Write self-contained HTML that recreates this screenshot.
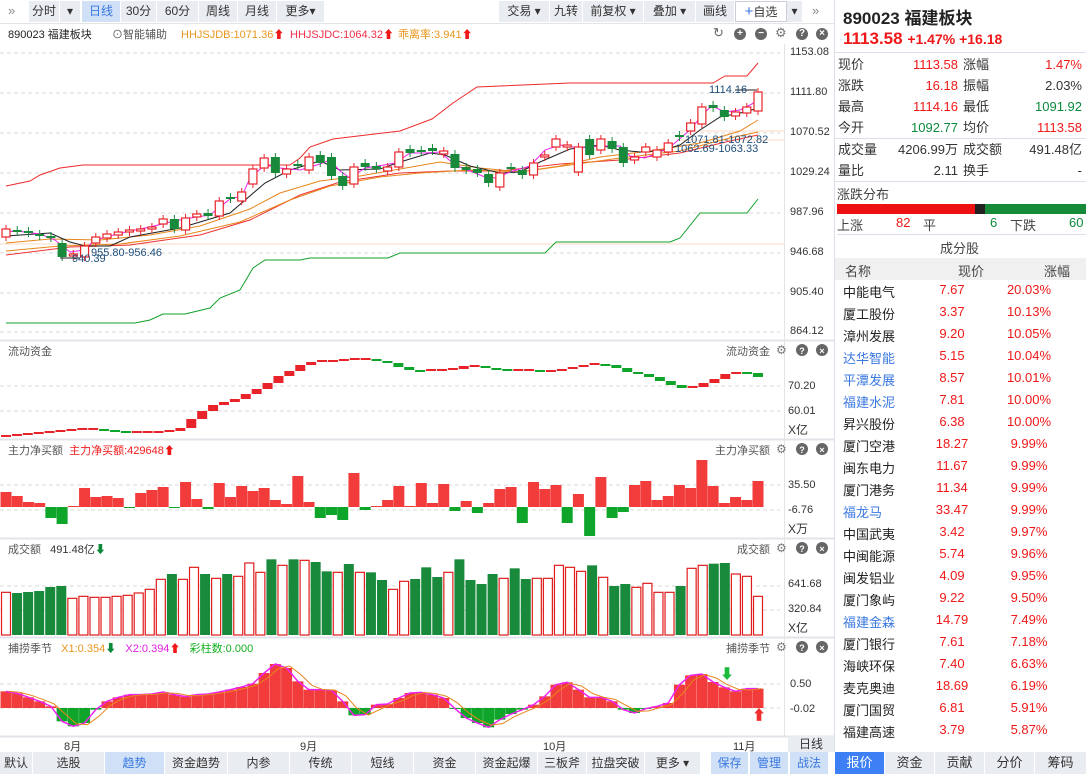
<!DOCTYPE html>
<html><head><meta charset="utf-8">
<style>
*{margin:0;padding:0;box-sizing:border-box}
body{width:1086px;height:774px;overflow:hidden;background:#fff;font-family:"Liberation Sans","Noto Sans CJK SC",sans-serif;font-size:12px;color:#333;position:relative}
.a{position:absolute;white-space:nowrap}
.btn{position:absolute;top:1px;height:21px;background:#e9ecf1;line-height:21px;text-align:center;font-size:12px;color:#333}
.bb{position:absolute;top:752px;height:22px;background:#e9ecf1;line-height:22px;text-align:center;font-size:12px;color:#333}
.r{color:#f01818}.g{color:#0b8a3c}
.rp{position:absolute;left:834px;width:252px}
.row{position:absolute;left:0;width:252px;height:21px;font-size:13px;line-height:21px}
.tab{position:absolute;top:752px;height:22px;width:50px;background:#e9ecf1;line-height:22px;text-align:center;font-size:13px;border-left:1px solid #fff}
.ic{position:absolute;width:12px;height:12px;border-radius:6px;background:#666;color:#fff;font-size:10px;line-height:12px;text-align:center;font-weight:bold}
</style></head><body>
<svg id="sv" width="834" height="774" style="position:absolute;left:0;top:0"></svg>

<div class="a" style="left:8px;top:3px;color:#888;font-size:13px">»</div>
<div class="btn" style="left:29px;width:30px">分时</div>
<div class="btn" style="left:60px;width:20px">▾</div>
<div class="btn" style="left:82px;width:38px;background:#cfe0f7;color:#3a78e0">日线</div>
<div class="btn" style="left:121px;width:35px">30分</div>
<div class="btn" style="left:157px;width:41px">60分</div>
<div class="btn" style="left:199px;width:38px">周线</div>
<div class="btn" style="left:238px;width:38px">月线</div>
<div class="btn" style="left:277px;width:47px">更多▾</div>
<div class="btn" style="left:499px;width:50px">交易 ▾</div>
<div class="btn" style="left:550px;width:32px">九转</div>
<div class="btn" style="left:583px;width:60px">前复权 ▾</div>
<div class="btn" style="left:644px;width:51px">叠加 ▾</div>
<div class="btn" style="left:696px;width:38px">画线</div>
<div class="btn" style="left:735px;width:52px;background:#fff;border:1px solid #ccd;line-height:19px"><span style="color:#3a78e0;font-size:15px">+</span>自选</div>
<div class="btn" style="left:787px;width:15px">▾</div>
<div class="a" style="left:812px;top:3px;color:#888;font-size:13px">»</div>
<div class="a" style="left:0;top:23px;width:834px;border-top:1px solid #e4e4e4"></div>

<div class="a" style="left:8px;top:26px;font-size:11px;color:#222">890023 福建板块</div>
<div class="a" style="left:112px;top:26px;font-size:11px;color:#555">⊙智能辅助</div>
<div class="a" style="left:181px;top:26px;font-size:11px;color:#e8961c">HHJSJDB:1071.36<span class="r">⬆</span></div>
<div class="a" style="left:290px;top:26px;font-size:11px;color:#f0304a">HHJSJDC:1064.32<span class="r">⬆</span></div>
<div class="a" style="left:398px;top:26px;font-size:11px;color:#e8961c">乖离率:3.941<span class="r">⬆</span></div>
<div class="a" style="left:713px;top:25px;font-size:13px;color:#666">↻</div>
<div class="ic" style="left:734px;top:28px">+</div>
<div class="ic" style="left:755px;top:28px">−</div>
<div class="a" style="left:775px;top:25px;font-size:13px;color:#777">⚙</div>
<div class="ic" style="left:796px;top:28px">?</div>
<div class="ic" style="left:816px;top:28px">×</div>

<div class="a" style="left:790px;top:46px;font-size:11px">1153.08</div>
<div class="a" style="left:790px;top:86px;font-size:11px">1111.80</div>
<div class="a" style="left:790px;top:126px;font-size:11px">1070.52</div>
<div class="a" style="left:790px;top:166px;font-size:11px">1029.24</div>
<div class="a" style="left:790px;top:206px;font-size:11px">987.96</div>
<div class="a" style="left:790px;top:246px;font-size:11px">946.68</div>
<div class="a" style="left:790px;top:286px;font-size:11px">905.40</div>
<div class="a" style="left:790px;top:325px;font-size:11px">864.12</div>
<div class="a" style="left:91px;top:247px;font-size:11px;color:#1f4e7a">955.80-956.46</div>
<div class="a" style="left:72px;top:253px;font-size:11px;color:#1f4e7a">940.39</div>
<div class="a" style="left:685px;top:134px;font-size:11px;color:#1f4e7a">1071.81-1072.82</div>
<div class="a" style="left:675px;top:143px;font-size:11px;color:#1f4e7a">1062.69-1063.33</div>
<div class="a" style="left:709px;top:84px;font-size:11px;color:#1f4e7a">1114.16</div>

<div class="a" style="left:8px;top:343px;font-size:11px;color:#555">流动资金</div>
<div class="a" style="left:726px;top:343px;font-size:11px;color:#555">流动资金</div>
<div class="a" style="left:788px;top:380px;font-size:11px">70.20</div>
<div class="a" style="left:788px;top:405px;font-size:11px">60.01</div>
<div class="a" style="left:788px;top:421px;font-size:12px">X亿</div>

<div class="a" style="left:8px;top:442px;font-size:11px;color:#555">主力净买额 <span class="r">&nbsp;主力净买额:429648⬆</span></div>
<div class="a" style="left:715px;top:442px;font-size:11px;color:#555">主力净买额</div>
<div class="a" style="left:788px;top:479px;font-size:11px">35.50</div>
<div class="a" style="left:788px;top:504px;font-size:11px">-6.76</div>
<div class="a" style="left:788px;top:520px;font-size:12px">X万</div>

<div class="a" style="left:8px;top:541px;font-size:11px;color:#555">成交额 &nbsp; <span style="color:#333">491.48亿</span><span class="g">⬇</span></div>
<div class="a" style="left:737px;top:541px;font-size:11px;color:#555">成交额</div>
<div class="a" style="left:788px;top:578px;font-size:11px">641.68</div>
<div class="a" style="left:788px;top:603px;font-size:11px">320.84</div>
<div class="a" style="left:788px;top:619px;font-size:12px">X亿</div>

<div class="a" style="left:8px;top:640px;font-size:11px;color:#555">捕捞季节 &nbsp; <span style="color:#e8961c">X1:0.354</span><span class="g">⬇</span> &nbsp; <span style="color:#e020e0">X2:0.394</span><span class="r">⬆</span> &nbsp; <span style="color:#12b020">彩柱数:0.000</span></div>
<div class="a" style="left:726px;top:640px;font-size:11px;color:#555">捕捞季节</div>
<div class="a" style="left:790px;top:678px;font-size:11px">0.50</div>
<div class="a" style="left:790px;top:703px;font-size:11px">-0.02</div>

<div class="a" style="left:64px;top:738px;font-size:11px">8月</div>
<div class="a" style="left:300px;top:738px;font-size:11px">9月</div>
<div class="a" style="left:543px;top:738px;font-size:11px">10月</div>
<div class="a" style="left:733px;top:738px;font-size:11px">11月</div>
<div class="a" style="left:788px;top:736px;width:46px;height:16px;background:#e9ecf1;text-align:center;font-size:12px;line-height:16px">日线</div>

<div class="bb" style="left:0;width:32px">默认</div>
<div class="bb" style="left:33px;width:71px">选股</div>
<div class="bb" style="left:105px;width:59px;background:#cfe0f7;color:#3a78e0">趋势</div>
<div class="bb" style="left:165px;width:62px">资金趋势</div>
<div class="bb" style="left:228px;width:61px">内参</div>
<div class="bb" style="left:290px;width:61px">传统</div>
<div class="bb" style="left:352px;width:61px">短线</div>
<div class="bb" style="left:414px;width:61px">资金</div>
<div class="bb" style="left:476px;width:61px">资金起爆</div>
<div class="bb" style="left:538px;width:48px">三板斧</div>
<div class="bb" style="left:587px;width:57px">拉盘突破</div>
<div class="bb" style="left:645px;width:55px">更多 ▾</div>
<div class="bb" style="left:711px;width:37px;background:#cfe0f7;color:#3a78e0">保存</div>
<div class="bb" style="left:750px;width:38px;background:#cfe0f7;color:#3a78e0">管理</div>
<div class="bb" style="left:790px;width:38px;background:#cfe0f7;color:#3a78e0">战法</div>

<div class="a" style="left:834px;top:0;width:1px;height:774px;background:#dde"></div>
<div class="a" style="left:843px;top:4px;font-size:17px;font-weight:bold;color:#222">890023 福建板块</div>
<div class="a r" style="left:843px;top:29px;font-size:17px;font-weight:bold">1113.58 <span style="font-size:14px">+1.47% +16.18</span></div>
<div class="a" style="left:835px;top:52px;width:251px;border-top:1px solid #dde"></div>
<div class="rp" style="top:54px;height:84px">
 <div class="row" style="top:0"><span class="a" style="left:4px">现价</span><span class="a r" style="right:128px">1113.58</span><span class="a" style="left:129px">涨幅</span><span class="a r" style="right:4px">1.47%</span></div>
 <div class="row" style="top:21px"><span class="a" style="left:4px">涨跌</span><span class="a r" style="right:128px">16.18</span><span class="a" style="left:129px">振幅</span><span class="a" style="right:4px">2.03%</span></div>
 <div class="row" style="top:42px"><span class="a" style="left:4px">最高</span><span class="a r" style="right:128px">1114.16</span><span class="a" style="left:129px">最低</span><span class="a g" style="right:4px">1091.92</span></div>
 <div class="row" style="top:63px"><span class="a" style="left:4px">今开</span><span class="a g" style="right:128px">1092.77</span><span class="a" style="left:129px">均价</span><span class="a r" style="right:4px">1113.58</span></div>
</div>
<div class="a" style="left:835px;top:138px;width:251px;border-top:1px solid #dde"></div>
<div class="rp" style="top:139px">
 <div class="row" style="top:0"><span class="a" style="left:4px">成交量</span><span class="a" style="right:128px">4206.99万</span><span class="a" style="left:129px">成交额</span><span class="a" style="right:4px">491.48亿</span></div>
 <div class="row" style="top:21px"><span class="a" style="left:4px">量比</span><span class="a" style="right:128px">2.11</span><span class="a" style="left:129px">换手</span><span class="a" style="right:4px">-</span></div>
</div>
<div class="a" style="left:835px;top:181px;width:251px;border-top:1px solid #dde"></div>
<div class="a" style="left:837px;top:184px;font-size:13px;color:#444">涨跌分布</div>
<div class="a" style="left:837px;top:204px;width:138px;height:10px;background:#ee1111"></div>
<div class="a" style="left:975px;top:204px;width:10px;height:10px;background:#222"></div>
<div class="a" style="left:985px;top:204px;width:101px;height:10px;background:#178a3a"></div>
<div class="a" style="left:837px;top:215px;font-size:13px;color:#444">上涨</div>
<div class="a r" style="left:896px;top:215px;font-size:13px">82</div>
<div class="a" style="left:923px;top:215px;font-size:13px;color:#444">平</div>
<div class="a g" style="left:990px;top:215px;font-size:13px">6</div>
<div class="a" style="left:1010px;top:215px;font-size:13px;color:#444">下跌</div>
<div class="a g" style="left:1069px;top:215px;font-size:13px">60</div>
<div class="a" style="left:837px;top:234px;width:249px;border-top:1px solid #dde"></div>
<div class="a" style="left:940px;top:238px;font-size:13px;color:#444">成分股</div>
<div class="a" style="left:835px;top:258px;width:251px;height:22px;background:#f0f0f0"></div>
<div class="a" style="left:845px;top:261px;font-size:13px;color:#444">名称</div>
<div class="a" style="left:958px;top:261px;font-size:13px;color:#444">现价</div>
<div class="a" style="left:1044px;top:261px;font-size:13px;color:#444">涨幅</div>
<div id="stocks"></div>

<div class="tab" style="left:834px;background:#3d7ff5;color:#fff">报价</div>
<div class="tab" style="left:884px">资金</div>
<div class="tab" style="left:934px">贡献</div>
<div class="tab" style="left:984px">分价</div>
<div class="tab" style="left:1034px;width:52px">筹码</div>

<script>
var S=[["中能电气","7.67","20.03%"],["厦工股份","3.37","10.13%"],["漳州发展","9.20","10.05%"],["达华智能","5.15","10.04%",1],["平潭发展","8.57","10.01%",1],["福建水泥","7.81","10.00%",1],["昇兴股份","6.38","10.00%"],["厦门空港","18.27","9.99%"],["闽东电力","11.67","9.99%"],["厦门港务","11.34","9.99%"],["福龙马","33.47","9.99%",1],["中国武夷","3.42","9.97%"],["中闽能源","5.74","9.96%"],["闽发铝业","4.09","9.95%"],["厦门象屿","9.22","9.50%"],["福建金森","14.79","7.49%",1],["厦门银行","7.61","7.18%"],["海峡环保","7.40","6.63%"],["麦克奥迪","18.69","6.19%"],["厦门国贸","6.81","5.91%"],["福建高速","3.79","5.87%"]];
var h="";S.forEach(function(s,i){var t=282+i*22;h+='<div class="a" style="left:843px;top:'+t+'px;font-size:13px;color:'+(s[3]?'#3a78e0':'#222')+'">'+s[0]+'</div><div class="a r" style="left:912px;width:80px;text-align:center;top:'+t+'px;font-size:13px">'+s[1]+'</div><div class="a r" style="left:999px;width:60px;text-align:center;top:'+t+'px;font-size:13px">'+s[2]+'</div>';});
document.getElementById("stocks").innerHTML=h;

var sv=document.getElementById("sv"),o="";
var R="#e8232a",G="#198a3c",G2="#0ea52a";
function L(x1,y1,x2,y2,c,w,d){o+='<line x1="'+x1+'" y1="'+y1+'" x2="'+x2+'" y2="'+y2+'" stroke="'+c+'" stroke-width="'+(w||1)+'"'+(d?' stroke-dasharray="4,3"':'')+'/>';}
function P(pts,c,w){o+='<polyline fill="none" stroke="'+c+'" stroke-width="'+(w||1)+'" points="'+pts.map(function(p){return p.join(",")}).join(" ")+'"/>';}
function Rc(x,y,w,hh,f,s){o+='<rect x="'+x+'" y="'+y+'" width="'+w+'" height="'+Math.max(hh,1)+'" fill="'+f+'"'+(s?' stroke="'+s+'" stroke-width="1.2"':'')+'/>';}
[340,439,538,637,736].forEach(function(y){L(0,y+0.5,834,y+0.5,"#e2e4ea",2)});
L(784.5,44,784.5,736,"#e4e4e4",1);
[53,93,133,173,213,253,293,332].forEach(function(y){L(0,y,780,y,"#dadada",1,1)});
[386,411].forEach(function(y){L(0,y,780,y,"#dadada",1,1)});
[485,510].forEach(function(y){L(0,y,780,y,"#dadada",1,1)});
[586,610].forEach(function(y){L(0,y,780,y,"#dadada",1,1)});
[684,708].forEach(function(y){L(0,y,780,y,"#dadada",1,1)});
L(0,244,784,244,"#fbd9c4",1);L(680,131,784,131,"#fbd9c4",1);L(680,140,784,140,"#fbd9c4",1);
P([[6,186],[30,181],[40,175],[60,168],[83,165],[290,165],[300,158],[310,147],[333,139],[400,131],[432,119],[453,103],[477,87],[570,83],[713,83],[725,76],[747,76],[758,63]],"#ee2a2a");
P([[6,323],[135,323],[150,320],[163,314],[185,314],[210,308],[220,298],[240,290],[253,268],[265,260],[300,260],[310,258],[388,258],[400,253],[545,253],[556,242],[670,242],[680,238],[700,213],[747,213],[758,199]],"#12a02a");
P([[6,255],[70,247],[130,245],[200,235],[250,220],[300,195],[340,182],[400,173],[450,171],[500,171],[560,164],[620,160],[680,153],[730,141],[758,135]],"#ee3333");
P([[6,251],[60,246],[120,244],[180,236],[240,222],[290,200],[330,186],[380,177],[420,173],[470,170],[520,172],[570,165],[620,158],[680,151],[730,138],[758,132]],"#e8861c");
P([[6,243],[50,239],[100,240],[150,235],[200,226],[250,209],[280,193],[320,181],[360,176],[400,169],[440,162],[480,168],[520,172],[560,166],[600,157],[650,151],[700,143],[740,131],[758,120]],"#e8861c");
P([[6,236],[50,233],[70,242],[85,246],[110,246],[130,237],[180,228],[230,213],[265,183],[290,170],[320,161],[340,170],[380,169],[400,162],[430,153],[445,155],[470,166],[500,173],[520,172],[540,162],[570,149],[600,145],[620,150],[640,152],[660,151],[680,145],[700,130],[720,117],[745,112],[758,108]],"#222");
P([[6,232],[17,231],[40,234],[55,240],[70,252],[84,250],[95,240],[110,236],[130,231],[150,227],[170,222],[190,218],[210,215],[230,199],[242,196],[250,178],[265,165],[280,168],[300,170],[320,164],[330,160],[340,171],[350,178],[365,168],[378,166],[395,163],[410,153],[425,153],[440,152],[455,165],[470,171],[485,177],[496,178],[510,172],[530,166],[545,150],[560,145],[580,148],[600,146],[620,146],[630,156],[645,158],[660,152],[670,147],[690,130],[705,112],[712,106],[725,112],[740,110],[752,104],[758,99]],"#ee22ee");
var C=[[229,237,"r"],[230,232,"g"],[231,233,"g"],[234,236,"g"],[236,238,"g"],[243,257,"g"],[254,256,"r"],[246,257,"r"],[237,243,"r"],[234,238,"r"],[232,235,"r"],[230,232,"r"],[229,231,"r"],[227,229,"r"],[219,224,"r"],[219,229,"g"],[218,230,"r"],[214,217,"r"],[213,216,"g"],[201,216,"r"],[197,199,"g"],[192,201,"r"],[169,184,"r"],[158,168,"r"],[157,173,"g"],[169,174,"r"],[164,166,"g"],[157,170,"r"],[155,163,"g"],[157,176,"g"],[176,186,"g"],[167,184,"r"],[163,167,"g"],[166,169,"g"],[167,171,"r"],[152,167,"r"],[149,153,"g"],[150,152,"g"],[148,151,"g"],[151,154,"r"],[154,168,"g"],[167,170,"g"],[169,173,"g"],[174,183,"g"],[173,187,"r"],[167,169,"g"],[170,175,"g"],[163,175,"r"],[155,157,"r"],[139,147,"r"],[145,147,"r"],[147,172,"r"],[139,155,"g"],[139,150,"r"],[141,149,"g"],[147,163,"g"],[157,160,"r"],[147,152,"r"],[150,157,"r"],[143,152,"r"],[135,137,"g"],[123,131,"r"],[107,124,"r"],[105,108,"g"],[110,117,"g"],[112,116,"r"],[107,113,"r"],[92,111,"r"]];
var n=C.length;
function X(i,m){return 6+(758-6)*i/(m-1);}
C.forEach(function(c,i){var x=X(i,n),col=c[2]=="r"?R:G;L(x,c[0]-4,x,c[1]+4,col,1);
 if(c[2]=="r")Rc(x-4,c[0],8,c[1]-c[0],"#fff",col);else Rc(x-4.5,c[0],9,c[1]-c[0],col);});
L(60,258,80,258,"#222",1);L(735,90,757,90,"#222",1);
var F=[436,435,434,433,432,431,430,429,429,430,431,432,432,432,432,431,428,419,411,405,402,399,394,389,383,376,371,365,362,361,361,360,359,359,361,363,367,370,371,370,370,369,366,366,368,369,370,370,370,371,371,369,367,365,364,365,368,372,374,377,381,385,388,387,383,379,374,372,373,377];
var m=F.length;
for(var i=0;i<m;i++){var x=X(i,m),p=i?F[i-1]:F[0],c=F[i];var up=c<=p;var t=Math.min(p,c),b=Math.max(p,c);if(b-t<2){t=c-1;b=c+1;}Rc(x-5,t,10,b-t,up?R:G2);}
var Z=[492,496,502,503,518,524,506,488,497,496,498,508,493,490,487,508,482,499,509,483,497,486,491,488,500,504,476,502,518,515,520,473,510,506,500,486,506,483,503,484,511,501,513,503,489,487,523,482,489,485,523,494,536,477,518,512,485,481,500,496,485,488,460,486,503,497,500,481];
m=Z.length;var z0=507;
Z.forEach(function(v,i){var x=X(i,m);if(v<z0)Rc(x-5.5,v,11,z0-v,"#f23c3c");else Rc(x-5.5,z0,11,Math.max(v-z0,1),G2);});
var V=[[163,1],[165,0],[162,0],[159,0],[147,0],[144,0],[181,1],[175,1],[178,1],[178,1],[175,1],[172,1],[165,1],[154,1],[124,1],[108,0],[124,1],[88,1],[108,0],[121,1],[108,0],[115,1],[75,1],[103,1],[64,0],[82,1],[64,0],[67,1],[72,0],[100,0],[103,1],[78,0],[103,1],[103,0],[126,0],[154,1],[130,1],[123,0],[88,0],[117,0],[103,1],[64,0],[126,0],[138,0],[108,0],[121,1],[91,0],[123,0],[121,1],[121,1],[82,1],[88,1],[100,1],[82,0],[118,1],[144,0],[138,0],[148,1],[136,1],[163,1],[163,1],[144,0],[91,1],[82,1],[77,0],[75,0],[108,1],[115,1],[175,1]];
m=V.length;
V.forEach(function(v,i){var x=X(i,m),t=538+v[0]/3;if(v[1])Rc(x-4.5,t,9,635-t,"#fff","#e01c1c");else Rc(x-5,t,10,635-t,G);});
var B=[460,466,478,490,505,550,565,555,515,490,478,470,470,468,462,470,476,470,468,462,455,447,437,405,378,390,430,455,455,457,490,532,530,500,498,480,465,463,470,480,512,540,555,568,545,528,515,500,475,440,433,455,478,478,490,515,525,512,505,495,440,412,408,432,448,460,452,452];
m=B.length;var b0=708,mg=[],og=[];
B.forEach(function(v,i){var x=X(i,m),y=538+v/3;if(y<b0)Rc(x-5.5,y,11,b0-y,"#f23c3c");else Rc(x-5.5,b0,11,y-b0,G2);mg.push([x,y]);var pv=538+(i?B[i-1]:v)/3;og.push([x+3,(y+pv)/2]);});
P(mg,"#ee22ee",1.5);P(og,"#e8861c",1);
o+='<text x="720" y="679" fill="#1aba3a" font-size="14" font-weight="bold">⬇</text><text x="752" y="720" fill="#f03030" font-size="14" font-weight="bold">⬆</text>';
[343,442,541,640].forEach(function(y){o+='<text x="776" y="'+(y+11)+'" fill="#777" font-size="12">⚙</text><circle cx="802" cy="'+(y+7)+'" r="6" fill="#666"/><text x="802" y="'+(y+11)+'" fill="#fff" font-size="9" text-anchor="middle" font-weight="bold">?</text><circle cx="822" cy="'+(y+7)+'" r="6" fill="#666"/><text x="822" y="'+(y+11)+'" fill="#fff" font-size="9" text-anchor="middle" font-weight="bold">×</text>';});
sv.innerHTML=o;
</script>
</body></html>
